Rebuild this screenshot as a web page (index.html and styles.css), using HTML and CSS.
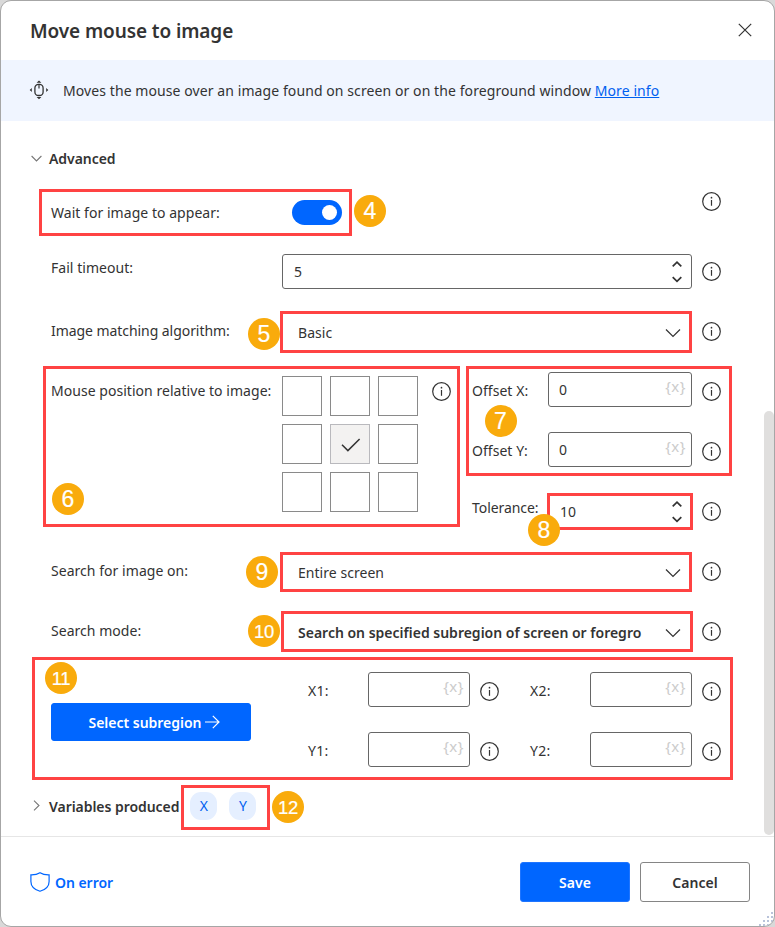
FILE: index.html
```html
<!DOCTYPE html>
<html lang="en">
<head>
<meta charset="utf-8">
<title>Move mouse to image</title>
<link rel="stylesheet" href="styles.css">
</head>
<body>
<svg width="0" height="0" class="defs">
  <symbol id="info" viewBox="0 0 19 19"><circle cx="9.5" cy="9.5" r="8.8" fill="none" stroke="#333" stroke-width="1.2"/><path d="M9.5 8v5.8" stroke="#333" stroke-width="1.2"/><circle cx="9.5" cy="5.7" r=".85" fill="#333"/></symbol>
  <symbol id="down" viewBox="0 0 16 10"><path d="M1 1.5 8 8.5 15 1.5" fill="none" stroke="#333" stroke-width="1.2"/></symbol>
  <symbol id="spin" viewBox="0 0 10 22"><path d="M.7 5.4 5 1.2 9.3 5.4M.7 16.2 5 20.4 9.3 16.2" fill="none" stroke="#333" stroke-width="1.7"/></symbol>
</svg>
<main class="dialog">
  <header class="titlebar">
    <h1>Move mouse to image</h1>
    <svg class="close" viewBox="0 0 14 14"><path d="M.8.8 13.2 13.2M13.2.8.8 13.2" stroke="#333" stroke-width="1.2"/></svg>
  </header>
  <section class="banner">
    <svg class="mouse" viewBox="0 0 20 20"><rect x="5.900" y="4.300" width="8.200" height="11.200" rx="3.600" fill="none" stroke="#333" stroke-width="1.300"/><path d="M10 4.300v4.300" stroke="#333" stroke-width="1.200"/><path d="M7.600 2.700 10 .500l2.400 2.200zM7.600 17.100 10 19.300l2.400-2.200zM2.800 7.900.700 10l2.100 2.100zM17.200 7.900 19.300 10l-2.100 2.100z" fill="#333"/></svg>
    <p>Moves the mouse over an image found on screen or on the foreground window <a href="#">More info</a></p>
  </section>
  <section class="content">
    <div class="group-head">
      <svg class="chev" viewBox="0 0 11 11"><path d="M.6 3 5.5 8 10.4 3" fill="none" stroke="#777" stroke-width="1.1"/></svg>
      <h2>Advanced</h2>
    </div>
    <div class="row wait">
      <label>Wait for image to appear:</label>
      <div><span class="toggle"></span></div>
      <svg class="info"><use href="#info"/></svg>
    </div>
    <div class="row raised">
      <label>Fail timeout:</label>
      <div class="field tall-offset"><span>5</span><svg class="spin"><use href="#spin"/></svg></div>
      <svg class="info"><use href="#info"/></svg>
    </div>
    <div class="row">
      <label class="tight">Image matching algorithm:</label>
      <div class="select"><span>Basic</span><svg class="down"><use href="#down"/></svg></div>
      <svg class="info"><use href="#info"/></svg>
    </div>
    <div class="split">
      <div class="position">
        <label>Mouse position relative to image:</label>
        <div class="cells">
          <i></i><i></i><i></i>
          <i></i><i class="on"><svg viewBox="0 0 20 14"><path d="M1 6.8 6.9 12.6 18.6 1" fill="none" stroke="#333" stroke-width="1.5"/></svg></i><i></i>
          <i></i><i></i><i></i>
        </div>
        <svg class="info"><use href="#info"/></svg>
      </div>
      <div class="offsets">
        <div class="row short"><label>Offset X:</label><div class="field"><span>0</span><em>{x}</em></div><svg class="info"><use href="#info"/></svg></div>
        <div class="row short"><label>Offset Y:</label><div class="field"><span>0</span><em>{x}</em></div><svg class="info"><use href="#info"/></svg></div>
        <div class="row short raised"><label class="tight">Tolerance:</label><div class="field tall-offset bare"><span>10</span><svg class="spin"><use href="#spin"/></svg></div><svg class="info"><use href="#info"/></svg></div>
      </div>
    </div>
    <div class="row">
      <label>Search for image on:</label>
      <div class="select"><span>Entire screen</span><svg class="down"><use href="#down"/></svg></div>
      <svg class="info"><use href="#info"/></svg>
    </div>
    <div class="row">
      <label>Search mode:</label>
      <div class="select"><b>Search on specified subregion of screen or foregro</b><svg class="down"><use href="#down"/></svg></div>
      <svg class="info"><use href="#info"/></svg>
    </div>
    <div class="subregion">
      <button class="primary pick">Select subregion <svg viewBox="0 0 15 14"><path d="M0 7h14M7.8.8 14 7l-6.2 6.2" fill="none" stroke="#fff" stroke-width="1.2"/></svg></button>
      <div class="coords">
        <div class="row coord"><label>X1:</label><div class="field"><em>{x}</em></div><svg class="info"><use href="#info"/></svg></div>
        <div class="row coord"><label>X2:</label><div class="field"><em>{x}</em></div><svg class="info"><use href="#info"/></svg></div>
        <div class="row coord"><label>Y1:</label><div class="field"><em>{x}</em></div><svg class="info"><use href="#info"/></svg></div>
        <div class="row coord"><label>Y2:</label><div class="field"><em>{x}</em></div><svg class="info"><use href="#info"/></svg></div>
      </div>
    </div>
    <div class="variables">
      <svg class="chev" viewBox="0 0 11 11"><path d="M3 .6 8 5.5 3 10.4" fill="none" stroke="#777" stroke-width="1.1"/></svg>
      <h2>Variables produced</h2>
      <span class="chip">X</span><span class="chip second">Y</span>
    </div>
    <span class="scrollbar"></span>
  </section>
  <footer>
    <a class="on-error"><svg viewBox="0 0 20 20"><path d="M10 .7C7.700 2.200 4.400 3 .900 2.900V9.400c0 4.700 3.600 8.200 9.100 9.900 5.500-1.700 9.100-5.200 9.100-9.900V2.900C15.600 3 12.300 2.200 10 .7z" fill="none" stroke="#0066ff" stroke-width="1.2"/></svg>On error</a>
    <button class="primary">Save</button>
    <button>Cancel</button>
  </footer>
  <svg class="grip" viewBox="0 0 15 15"><path d="M12 1h2v2h-2zM8 5h2v2H8zM12 5h2v2h-2zM4 9h2v2H4zM8 9h2v2H8zM12 9h2v2h-2zM0 13h2v2H0zM4 13h2v2H4zM8 13h2v2H8z" fill="#b9c3da"/></svg>
</main>
<div class="notes">
  <i class="box b4"></i><i class="box b5"></i><i class="box b6"></i><i class="box b7"></i><i class="box b8"></i><i class="box b9"></i><i class="box b10"></i><i class="box b11"></i><i class="box b12"></i>
  <span class="dot n4">4</span><span class="dot n5">5</span><span class="dot n6">6</span><span class="dot n7">7</span><span class="dot n8">8</span><span class="dot n9">9</span><span class="dot two n10">10</span><span class="dot two n11">11</span><span class="dot two n12">12</span>
</div>
</body>
</html>
```
FILE: styles.css
```css
* { box-sizing: border-box; margin: 0; }
body { position: relative; width: 775px; height: 927px; overflow: hidden; background: #d9d9d9; color: #333; font: 14px/20px "Noto Sans", "Open Sans", sans-serif; letter-spacing: .04px; }
svg { display: block; flex: none; }
.defs { position: absolute; }
.dialog { position: relative; width: 775px; height: 927px; border: 1px solid #a6a6a6; border-radius: 11px; background: #fff; overflow: hidden; display: flex; flex-direction: column; }
.titlebar { height: 59px; flex: none; padding: 0 22px 0 29px; display: flex; align-items: center; justify-content: space-between; }
h1 { font-size: 19px; font-weight: 600; line-height: 26px; letter-spacing: -.1px; }
.close { width: 14px; height: 14px; margin-top: -1px; }
.banner { height: 61px; flex: none; background: #f0f5ff; display: flex; align-items: center; padding-left: 28px; gap: 14px; }
.banner p { letter-spacing: .085px; }
.banner a { color: #0060f0; }
.mouse { width: 20px; height: 20px; margin-top: -1px; }

.content { position: relative; height: 716px; flex: none; border-bottom: 1px solid #e6e6e6; }
h2 { font-size: 14px; font-weight: 600; line-height: 20px; letter-spacing: -.05px; }
.group-head { height: 60px; padding: 28px 0 0 30px; display: flex; gap: 7px; }
.chev { width: 11px; height: 11px; margin-top: 4px; }
.row { height: 60px; display: grid; grid-template-columns: 231px 410px 19px; align-items: start; padding-left: 50px; }
.row > .info { margin: 21px 0 0 10px; }
.info { width: 19px; height: 19px; }
label { padding-top: 20px; white-space: nowrap; }
.tight { letter-spacing: -.06px; }
.raised label { padding-top: 17px; }
.wait label { padding-top: 22px; }
.row.wait > .info { margin-top: 11px; }
.toggle { display: block; width: 50px; height: 25px; margin: 19px 0 0 10px; border-radius: 13px; background: #0066ff; padding: 5px 5px 5px 30px; }
.toggle::after { content: ""; display: block; width: 15px; height: 15px; border-radius: 50%; background: #fff; }
.field { height: 35px; margin-top: 11px; border: 1px solid #666; border-radius: 3px; display: flex; justify-content: space-between; align-items: center; padding: 0 5px 0 10px; }
.field.tall-offset { margin-top: 13px; padding: 0 9px 0 11px; }
.field.bare { border-color: transparent; }
.field em { margin: -7px 0 0 auto; font-style: normal; font-size: 15px; letter-spacing: .5px; color: #ccc; }
.spin { width: 10px; height: 22px; }
.select { height: 35px; margin-top: 14px; display: flex; align-items: center; justify-content: space-between; padding: 0 11px 0 16px; }
.select b { font-weight: 600; letter-spacing: 0; }
.down { width: 16px; height: 10px; }

.split { display: flex; height: 180px; padding-left: 50px; }
.position { width: 421px; display: grid; grid-template-columns: 231px 150px 19px; align-items: start; }
.position .info { margin-top: 21px; }
.cells { display: grid; grid-template-columns: repeat(3, 40px); grid-auto-rows: 40px; gap: 8px; padding-top: 15px; }
.cells i { border: 1px solid #8a8a8a; display: flex; align-items: center; justify-content: center; }
.cells .on { background: #f3f2f1; border-color: #b9b9bd; }
.cells .on svg { width: 20px; height: 14px; margin: 1px 0 0 1px; }
.row.short { padding-left: 0; grid-template-columns: 76px 144px 19px; }

.subregion { height: 120px; display: flex; padding-left: 50px; }
button { width: 110px; height: 40px; border: 1px solid #858585; border-radius: 3px; background: #fff; color: #333; font: 600 14px/20px "Noto Sans", "Open Sans", sans-serif; letter-spacing: .04px; padding: 1px 0 0; display: flex; align-items: center; justify-content: center; }
.primary { background: #0066ff; border-color: #1f75ff; color: #fff; }
.pick { width: 200px; height: 38px; margin-top: 42px; gap: 4px; padding: 1px 0 0 7px; border-color: #0066ff; letter-spacing: -.02px; }
.pick svg { width: 15px; height: 14px; margin-top: -1px; }
.coords { margin-left: 57px; display: grid; grid-template-columns: 222px 222px; align-content: start; }
.row.coord { padding-left: 0; grid-template-columns: 60px 102px 19px; }
.coord label { letter-spacing: .3px; }

.variables { display: flex; align-items: flex-start; padding: 16px 0 0 30px; gap: 7px; height: 55px; }
.chip { width: 27px; height: 28px; border-radius: 11px; background: #e5efff; color: #0060f0; text-align: center; line-height: 28px; margin: -5px 0 0 4px; }
.chip.second { margin-left: 5px; }
.variables .chev { margin-top: 3px; }
.scrollbar { position: absolute; right: 0; top: 290px; width: 10px; height: 424px; border-radius: 5px; background: #e0dfde; }

footer { flex: 1; display: flex; align-items: flex-start; padding: 25px 24px 0 29px; gap: 10px; }
.on-error { margin: 10px auto 0 0; color: #0066ff; font-weight: 600; letter-spacing: -.04px; line-height: 22px; display: flex; gap: 5px; }
.on-error svg { width: 20px; height: 20px; }
.grip { position: absolute; right: 0; bottom: 0; width: 15px; height: 15px; }

/* Callouts laid over the dialog */
.notes { position: absolute; inset: 0; pointer-events: none; }
.box { position: absolute; border: 3px solid #ff4343; }
.b4 { left: 39px; top: 189px; width: 313px; height: 47px; }
.b5 { left: 280px; top: 311px; width: 412px; height: 42px; }
.b6 { left: 43px; top: 366px; width: 417px; height: 161px; }
.b7 { left: 466px; top: 366px; width: 266px; height: 110px; }
.b8 { left: 547px; top: 493px; width: 146px; height: 37px; }
.b9 { left: 280px; top: 552px; width: 412px; height: 40px; }
.b10 { left: 281px; top: 611px; width: 412px; height: 41px; }
.b11 { left: 32px; top: 657px; width: 701px; height: 123px; }
.b12 { left: 181px; top: 785px; width: 89px; height: 45px; }
.dot { position: absolute; width: 32px; height: 32px; border-radius: 50%; background: #f9ab0c; color: #fff; font: 23px/33px "Liberation Sans", sans-serif; -webkit-text-stroke: .2px #fff; text-align: center; letter-spacing: 0; }
.two { font-size: 18.5px; letter-spacing: -.3px; }
.n4 { left: 354px; top: 194.5px; }
.n5 { left: 248px; top: 317.5px; }
.n6 { left: 52px; top: 482.5px; }
.n7 { left: 484.5px; top: 404.5px; }
.n8 { left: 528px; top: 513.500px; }
.n9 { left: 246px; top: 555.5px; }
.n10 { left: 248px; top: 614.5px; }
.n11 { left: 45px; top: 661.5px; }
.n12 { left: 272px; top: 790.5px; }
```
